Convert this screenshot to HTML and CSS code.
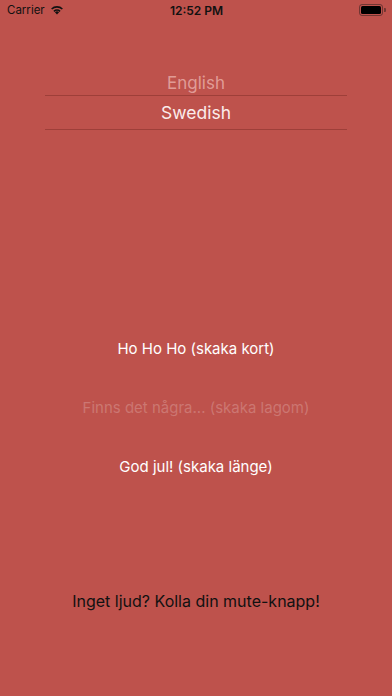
FILE: index.html
```html
<!DOCTYPE html>
<html>
<head>
<meta charset="utf-8">
<link rel="stylesheet" href="styles.css">
</head>
<body>
<div class="screen">
  <div class="status">
    <div class="status-left">
      <span class="carrier">Carrier</span>
      <svg class="wifi" width="14" height="10" viewBox="0 0 14 10">
        <path d="M7 9.6 L4.9 7.3 A3 3 0 0 1 9.1 7.3 Z" fill="#111"/>
        <path d="M3.4 5.8 A5.2 5.2 0 0 1 10.6 5.8 L9.6 6.9 A3.8 3.8 0 0 0 4.4 6.9 Z" fill="#111"/>
        <path d="M1.1 3.5 A8.4 8.4 0 0 1 12.9 3.5 L11.8 4.6 A6.9 6.9 0 0 0 2.2 4.6 Z" fill="#111"/>
      </svg>
    </div>
    <div class="time">12:52 PM</div>
    <div class="status-right">
      <div class="battery"><div class="battery-fill"></div></div>
      <div class="battery-tip"></div>
    </div>
  </div>

  <div class="picker">
    <div class="picker-row faded">English</div>
    <div class="picker-row selected">Swedish</div>
  </div>

  <div class="actions">
    <div class="action">Ho Ho Ho (skaka kort)</div>
    <div class="action disabled">Finns det några... (skaka lagom)</div>
    <div class="action">God jul! (skaka länge)</div>
  </div>

  <div class="note">Inget ljud? Kolla din mute-knapp!</div>
</div>
</body>
</html>
```

FILE: styles.css
```css
html, body {
  margin: 0;
  padding: 0;
  background: #be524c;
}
.screen {
  width: 392px;
  height: 696px;
  display: flex;
  flex-direction: column;
  font-family: Inter, "Liberation Sans", sans-serif;
  background: #be524c;
}
.status {
  height: 20px;
  display: flex;
  align-items: center;
  justify-content: space-between;
  padding: 0 6px 0 7px;
  font-size: 12px;
  color: #111;
}
.status-left {
  display: flex;
  align-items: center;
  gap: 5px;
  width: 80px;
}
.carrier {
  font-size: 11.5px;
}
.wifi { margin-top: -1px; }
.time {
  font-weight: 600;
  font-size: 12px;
}
.status-right {
  width: 80px;
  display: flex;
  justify-content: flex-end;
  align-items: center;
}
.battery {
  width: 20px;
  height: 8px;
  border: 1px solid rgba(20,20,20,0.45);
  border-radius: 3px;
  padding: 1px;
  box-sizing: content-box;
  display: flex;
}
.battery-fill {
  flex: 1;
  background: #000;
  border-radius: 1.5px;
}
.battery-tip {
  width: 1.5px;
  height: 4px;
  background: rgba(20,20,20,0.45);
  border-radius: 0 1px 1px 0;
  margin-left: 1px;
}
.picker {
  margin: 52px 45px 0 45px;
  display: flex;
  flex-direction: column;
}
.picker-row {
  text-align: center;
}
.faded {
  font-size: 17px;
  color: rgba(255, 220, 215, 0.55);
  height: 23px;
  line-height: 23px;
}
.selected {
  font-size: 17.5px;
  color: #fbeceb;
  height: 33px;
  line-height: 33px;
  border-top: 1px solid rgba(120, 40, 35, 0.45);
  border-bottom: 1px solid rgba(120, 40, 35, 0.45);
}
.actions {
  margin-top: 209px;
  display: flex;
  flex-direction: column;
  align-items: center;
  gap: 39px;
}
.action {
  font-size: 15px;
  line-height: 20px;
  color: #fff;
}
.action.disabled {
  color: rgba(255, 255, 255, 0.22);
}
.note {
  margin-top: 113px;
  text-align: center;
  font-size: 16px;
  line-height: 22px;
  color: #111;
}
```
